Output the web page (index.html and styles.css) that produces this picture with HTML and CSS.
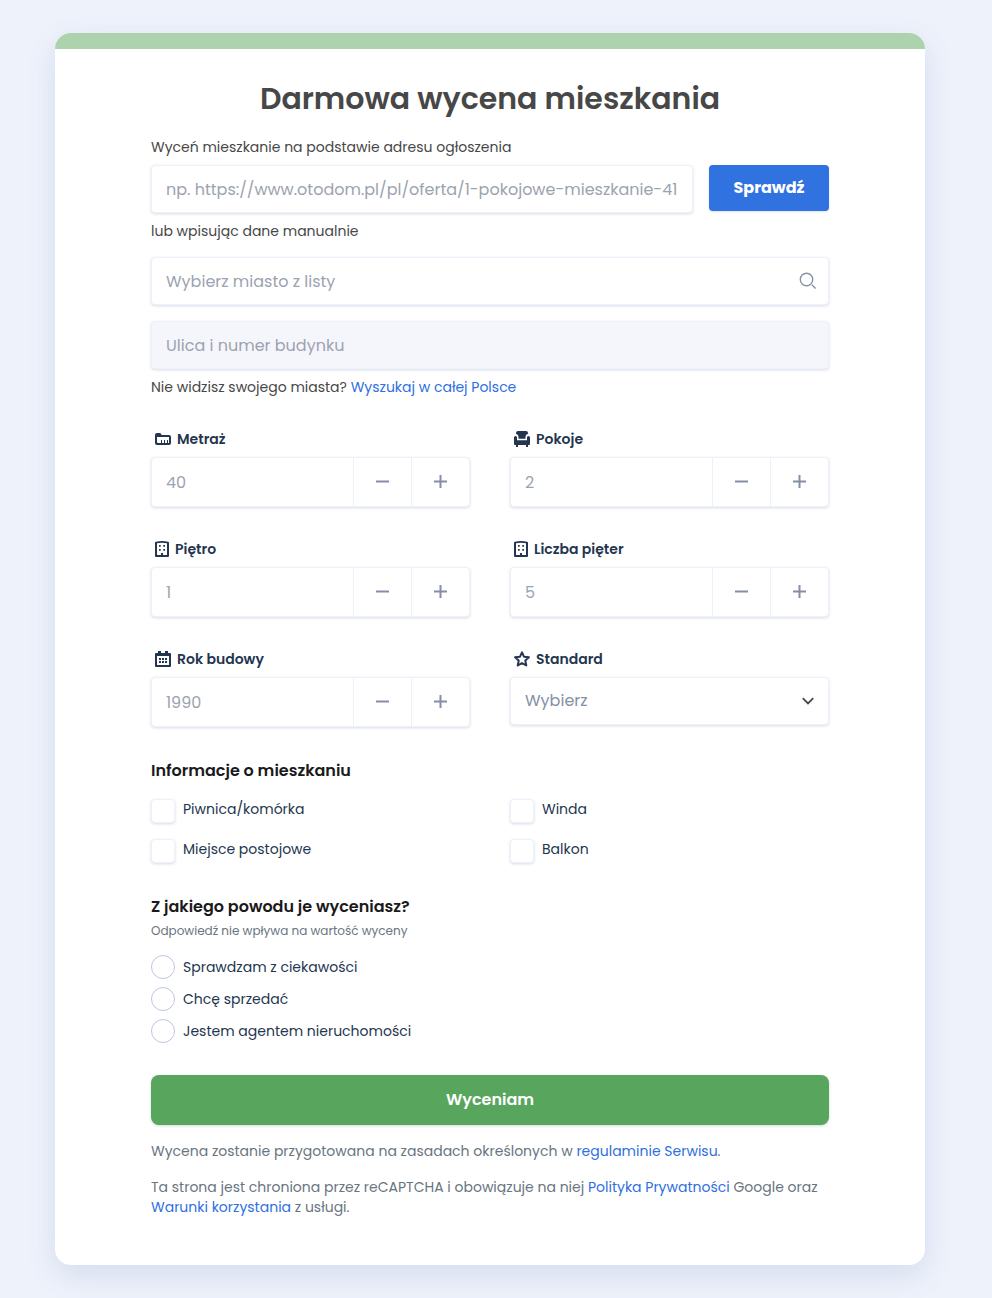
FILE: index.html
```html
<!DOCTYPE html>
<html lang="pl">
<head>
<meta charset="utf-8">
<meta name="viewport" content="width=device-width, initial-scale=1">
<title>Darmowa wycena mieszkania</title>
<link rel="stylesheet" href="styles.css">
</head>
<body class="page">
<main class="card">
<form class="form">
  <h1 class="title">Darmowa wycena mieszkania</h1>

  <label class="text" for="url">Wyceń mieszkanie na podstawie adresu ogłoszenia</label>
  <div class="url-row">
    <input class="field" id="url" type="text" placeholder="np. https://www.otodom.pl/pl/oferta/1-pokojowe-mieszkanie-41">
    <button class="check-button" type="button">Sprawdź</button>
  </div>
  <p class="text manual">lub wpisując dane manualnie</p>

  <div class="search">
    <input class="field" type="text" aria-label="Miasto" placeholder="Wybierz miasto z listy">
    <svg class="search-icon" viewBox="0 0 18 18" aria-hidden="true"><circle cx="7.5" cy="7.5" r="6.200"/><path d="M12.800 12.800l3.800 3.800"/></svg>
  </div>
  <input class="field street" type="text" aria-label="Ulica i numer budynku" placeholder="Ulica i numer budynku" disabled>
  <p class="text">Nie widzisz swojego miasta? <a class="link" href="#">Wyszukaj w całej Polsce</a></p>

  <div class="grid">
    <div class="group">
      <label class="label" for="area"><svg class="icon" viewBox="0 0 16 16" aria-hidden="true"><path fill-rule="evenodd" d="M0 4a2 2 0 0 1 2-2h2.500a2 2 0 0 1 2 2H14a2 2 0 0 1 2 2v6a2 2 0 0 1-2 2H2a2 2 0 0 1-2-2zM2 6v5a1 1 0 0 0 1 1h3V9h1v3h2V9h1v3h2V9h1v3h1V6z"/></svg>Metraż</label>
      <div class="stepper"><input class="number" id="area" type="text" inputmode="numeric" placeholder="40"><button class="step" type="button" aria-label="Mniej"><svg viewBox="0 0 13 13"><path d="M0 6.500h13"/></svg></button><button class="step" type="button" aria-label="Więcej"><svg viewBox="0 0 13 13"><path d="M0 6.500h13M6.500 0v13"/></svg></button></div>
    </div>
    <div class="group">
      <label class="label" for="rooms"><svg class="icon" viewBox="0 0 16 16" aria-hidden="true"><path d="M4 0h8a2 2 0 0 1 2 2v1c-1.500 0-2.500 1.500-2.500 3v1.800h-7V6C4.500 4.500 3.500 3 2 3V2a2 2 0 0 1 2-2zM0 6.500a1.500 1.500 0 0 1 3 0v2.800h10V6.500a1.500 1.500 0 0 1 3 0V13a1 1 0 0 1-1 1h-1v2h-2v-2H4v2H2v-2H1a1 1 0 0 1-1-1z"/></svg>Pokoje</label>
      <div class="stepper"><input class="number" id="rooms" type="text" inputmode="numeric" placeholder="2"><button class="step" type="button" aria-label="Mniej"><svg viewBox="0 0 13 13"><path d="M0 6.500h13"/></svg></button><button class="step" type="button" aria-label="Więcej"><svg viewBox="0 0 13 13"><path d="M0 6.500h13M6.500 0v13"/></svg></button></div>
    </div>
    <div class="group">
      <label class="label" for="floor"><svg class="icon narrow" viewBox="0 0 14 16" aria-hidden="true"><path fill-rule="evenodd" d="M1 .7q6-1.400 12 0a1 1 0 0 1 1 1V15a1 1 0 0 1-1 1H1a1 1 0 0 1-1-1V1.700a1 1 0 0 1 1-1zM2 2.200V14h4v-2h2v2h4V2.200q-5-.8-10 0zM4 4h1.700v1.700H4zM8.300 4H10v1.700H8.300zM4 8h1.700v1.700H4zM8.300 8H10v1.700H8.300z"/></svg>Piętro</label>
      <div class="stepper"><input class="number" id="floor" type="text" inputmode="numeric" placeholder="1"><button class="step" type="button" aria-label="Mniej"><svg viewBox="0 0 13 13"><path d="M0 6.500h13"/></svg></button><button class="step" type="button" aria-label="Więcej"><svg viewBox="0 0 13 13"><path d="M0 6.500h13M6.500 0v13"/></svg></button></div>
    </div>
    <div class="group">
      <label class="label" for="floors"><svg class="icon narrow" viewBox="0 0 14 16" aria-hidden="true"><path fill-rule="evenodd" d="M1 .7q6-1.400 12 0a1 1 0 0 1 1 1V15a1 1 0 0 1-1 1H1a1 1 0 0 1-1-1V1.700a1 1 0 0 1 1-1zM2 2.200V14h4v-2h2v2h4V2.200q-5-.8-10 0zM4 4h1.700v1.700H4zM8.300 4H10v1.700H8.300zM4 8h1.700v1.700H4zM8.300 8H10v1.700H8.300z"/></svg>Liczba pięter</label>
      <div class="stepper"><input class="number" id="floors" type="text" inputmode="numeric" placeholder="5"><button class="step" type="button" aria-label="Mniej"><svg viewBox="0 0 13 13"><path d="M0 6.500h13"/></svg></button><button class="step" type="button" aria-label="Więcej"><svg viewBox="0 0 13 13"><path d="M0 6.500h13M6.500 0v13"/></svg></button></div>
    </div>
    <div class="group">
      <label class="label" for="year"><svg class="icon" viewBox="0 0 16 16" aria-hidden="true"><path fill-rule="evenodd" d="M1 2h2V0h3v2h4V0h3v2h2a1 1 0 0 1 1 1v12a1 1 0 0 1-1 1H1a1 1 0 0 1-1-1V3a1 1 0 0 1 1-1zM2 5v9h12V5zM4 7h2v2H4zM7 7h2v2H7zM10 7h2v2h-2zM4 10h2v2H4zM7 10h2v2H7zM10 10h2v2h-2z"/></svg>Rok budowy</label>
      <div class="stepper"><input class="number" id="year" type="text" inputmode="numeric" placeholder="1990"><button class="step" type="button" aria-label="Mniej"><svg viewBox="0 0 13 13"><path d="M0 6.500h13"/></svg></button><button class="step" type="button" aria-label="Więcej"><svg viewBox="0 0 13 13"><path d="M0 6.500h13M6.500 0v13"/></svg></button></div>
    </div>
    <div class="group">
      <label class="label" for="standard"><svg class="icon star" viewBox="0 0 16 16" aria-hidden="true"><path d="M8 1.300l2 4.400 4.900.6-3.600 3.300 1 4.900L8 12.100l-4.300 2.400 1-4.900L1.100 6.300 6 5.700z"/></svg>Standard</label>
      <div class="select">
        <select class="field choice" id="standard"><option>Wybierz</option></select>
        <svg class="chevron" viewBox="0 0 12 8" aria-hidden="true"><path d="M.8 1.200L6 6.400l5.200-5.200"/></svg>
      </div>
    </div>
  </div>

  <fieldset class="set">
    <legend class="heading">Informacje o mieszkaniu</legend>
    <div class="checks">
      <label class="option top"><input class="box" type="checkbox">Piwnica/komórka</label>
      <label class="option top"><input class="box" type="checkbox">Winda</label>
      <label class="option top"><input class="box" type="checkbox">Miejsce postojowe</label>
      <label class="option top"><input class="box" type="checkbox">Balkon</label>
    </div>
  </fieldset>

  <fieldset class="set">
    <legend class="heading">Z jakiego powodu je wyceniasz?</legend>
    <p class="hint">Odpowiedź nie wpływa na wartość wyceny</p>
    <div class="radios">
      <label class="option"><input class="box round" type="radio" name="reason">Sprawdzam z ciekawości</label>
      <label class="option"><input class="box round" type="radio" name="reason">Chcę sprzedać</label>
      <label class="option"><input class="box round" type="radio" name="reason">Jestem agentem nieruchomości</label>
    </div>
  </fieldset>

  <button class="submit" type="button">Wyceniam</button>
  <p class="legal">Wycena zostanie przygotowana na zasadach określonych w <a class="link" href="#">regulaminie Serwisu</a>.</p>
  <p class="legal">Ta strona jest chroniona przez reCAPTCHA i obowiązuje na niej <a class="link" href="#">Polityka Prywatności</a> Google oraz <a class="link" href="#">Warunki korzystania</a> z usługi.</p>
</form>
</main>
</body>
</html>
```

FILE: styles.css
```css
* { box-sizing: border-box; }

.page {
  margin: 0;
  padding: 33px 67px 33px 55px;
  background: #eef2fb;
  color: #474747;
  font: 14px/20px Poppins, Inter, sans-serif;
}

.card {
  background: #fff;
  border-top: 16px solid #acd3ae;
  border-radius: 16px;
  box-shadow: 0 10px 30px rgba(60, 90, 160, 0.14);
}

.form { padding: 24px 96px 48px; }

.title {
  margin: 0;
  padding: 2px 0 14px;
  color: #474747;
  font-size: 30px;
  font-weight: 600;
  line-height: 48px;
  text-align: center;
}

.text { display: block; margin: 8px 0; }
.title + .text { margin-top: 0; }
.manual { margin-bottom: 16px; }
.link { color: #2f6fdf; text-decoration: none; }
.url-row { display: flex; align-items: flex-start; gap: 16px; }

.field,
.stepper {
  width: 100%;
  border: 1px solid #edf1fb;
  border-radius: 4px;
  background: #fff;
  box-shadow: 0 1px 3px rgba(40, 60, 100, 0.18);
}

.field {
  display: block;
  min-width: 0;
  height: 48px;
  padding: 0 14px;
  color: #474747;
  font: inherit;
  font-size: 16px;
}

.field::placeholder,
.number::placeholder { color: #9ca3af; opacity: 1; }

.street { margin-top: 16px; background: #f5f6fc; }

.check-button {
  flex: 0 0 120px;
  height: 46px;
  padding: 0;
  border: 0;
  border-radius: 4px;
  background: #2f72e0;
  box-shadow: 0 1px 2px rgba(40, 60, 100, 0.15);
  color: #fff;
  font: inherit;
  font-size: 16px;
  font-weight: 700;
}

.search,
.select { position: relative; }

.search-icon {
  position: absolute;
  top: 15px;
  right: 12px;
  width: 18px;
  height: 18px;
  fill: none;
  stroke: #8791a8;
  stroke-width: 1.4;
}

.grid {
  display: grid;
  grid-template-columns: repeat(2, minmax(0, 1fr));
  gap: 32px 40px;
  margin-top: 32px;
}

.label {
  display: flex;
  align-items: center;
  gap: 6px;
  margin-bottom: 8px;
  padding-left: 4px;
  color: #24364f;
  font-weight: 600;
}

.icon { width: 16px; height: 16px; fill: #24364f; }
.narrow { width: 14px; }
.star { fill: none; stroke: #24364f; stroke-width: 2; stroke-linejoin: round; }

.stepper { display: flex; height: 50px; }

.number {
  flex: 1;
  min-width: 0;
  padding: 2px 14px 0;
  border: 0;
  background: transparent;
  font: inherit;
  font-size: 16px;
}

.step {
  display: flex;
  flex: 0 0 58px;
  align-items: center;
  justify-content: center;
  padding: 0 0 1px;
  border: 0;
  border-left: 1px solid #edf1fb;
  background: transparent;
}

.step svg { width: 13px; height: 13px; stroke: #858da8; stroke-width: 2; }

.choice { appearance: none; color: #8590a6; }

.chevron {
  position: absolute;
  top: 20px;
  right: 15px;
  width: 12px;
  height: 8px;
  fill: none;
  stroke: #474747;
  stroke-width: 1.8;
  pointer-events: none;
}

.set { min-width: 0; margin: 32px 0 0; padding: 0; border: 0; }

.heading {
  padding: 0;
  color: #1a1a1a;
  font-size: 16px;
  font-weight: 600;
  line-height: 24px;
}

.checks {
  display: grid;
  grid-template-columns: 1fr 1fr;
  gap: 16px 40px;
  margin-top: 16px;
}

.option { display: flex; align-items: center; gap: 8px; color: #24364f; }
.top { align-items: flex-start; }

.box {
  flex: none;
  width: 24px;
  height: 24px;
  margin: 0;
  border: 1px solid #edf1fb;
  border-radius: 4px;
  appearance: none;
  background: #fff;
  box-shadow: 0 1px 3px rgba(40, 60, 100, 0.18);
}

.round { border-color: #bcc6de; border-radius: 50%; box-shadow: none; }

.hint { margin: 0 0 12px; color: #69757f; font-size: 12px; line-height: 24px; }
.radios { display: grid; gap: 8px; }

.submit {
  width: 100%;
  height: 50px;
  margin-top: 32px;
  border: 0;
  border-radius: 8px;
  background: #58a55d;
  box-shadow: 0 1px 3px rgba(40, 60, 100, 0.2);
  color: #fff;
  font: inherit;
  font-size: 16px;
  font-weight: 600;
}

.legal { margin: 16px 0 0; color: #69757f; }
```
